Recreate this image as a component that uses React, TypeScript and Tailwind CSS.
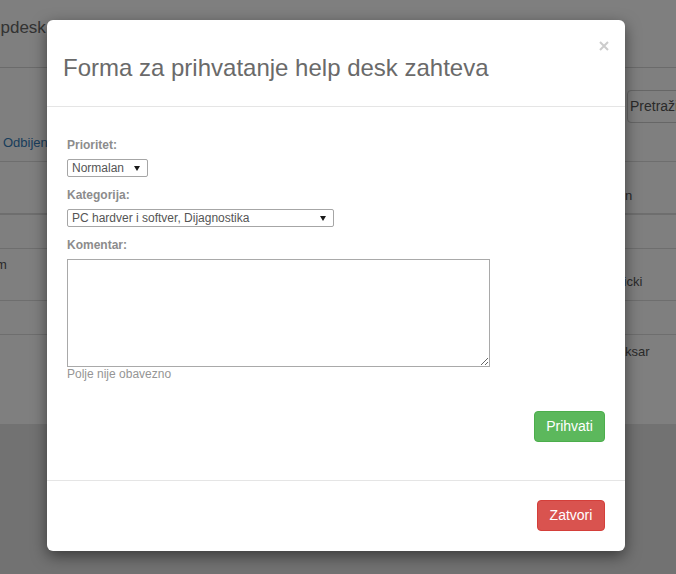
import React from "react";

const Arrow = () => (
    <svg width="6" height="5" viewBox="0 0 6 5" className="shrink-0">
        <polygon points="0,0 6,0 3,5" fill="#1a1a1a" />
    </svg>
);

const FakeSelect = (props: { value: string; width: string }) => {
    return (
        <div className={"flex h-[18px] items-center justify-between rounded-[2px] border border-[#a6a6a6] bg-white pl-[4px] pr-[7px] text-[12px] leading-none text-[#555] " + props.width}>
            <span>{props.value}</span>
            <Arrow />
        </div>
    );
};

export default function App() {
    return (
        <div className="relative h-[574px] w-full overflow-hidden bg-[#e4e4e4] font-['Liberation_Sans',Arial,sans-serif]">
            {/* page behind the modal */}
            <div className="h-[424px] bg-white text-[13px] leading-[17px] text-[#555]">
                <nav className="flex h-[68px] items-start border-b border-[#d6d6d6] pt-[18px]">
                    <span className="-ml-[25px] text-[17px] leading-[20px] text-[#666]">Helpdesk</span>
                </nav>
                <div className="flex h-[93px] flex-col">
                    <div className="mt-[22px] flex h-[33px] justify-end">
                        <button className="-mr-[22px] w-[71px] rounded-[4px] border border-[#ccc] bg-white pl-[2px] text-left text-[14px] text-[#555]">
                            Pretraži
                        </button>
                    </div>
                    <div className="flex flex-1 items-center">
                        <a className="ml-[3px] text-[#337ab7]">Odbijen</a>
                    </div>
                </div>
                <div className="grid h-[54px] grid-cols-[47px_1fr_51px] border-t border-b-2 border-[#ddd]">
                    <div />
                    <div />
                    <div className="flex items-end pb-[9px]">
                        <span className="-ml-[44px] whitespace-nowrap text-[#555]">Dodeljen</span>
                    </div>
                </div>
                <div className="grid h-[34px] grid-cols-[47px_1fr_51px] border-b border-[#ddd]" />
                <div className="grid h-[52px] grid-cols-[47px_1fr_51px] border-b border-[#ddd]">
                    <div className="overflow-hidden pt-[7px]">
                        <span className="-ml-[33px] block whitespace-nowrap">Sistem</span>
                    </div>
                    <div />
                    <div className="pt-[24px]">
                        <span className="-ml-[26px] block whitespace-nowrap">Tomicki</span>
                    </div>
                </div>
                <div className="grid h-[34px] grid-cols-[47px_1fr_51px] border-b border-[#ddd]" />
                <div className="grid grid-cols-[47px_1fr_51px]">
                    <div />
                    <div />
                    <div className="pt-[8px]">
                        <span className="-ml-[16px] block whitespace-nowrap">Paksar</span>
                    </div>
                </div>
            </div>

            {/* backdrop */}
            <div className="absolute inset-0 bg-black/50" />

            {/* modal */}
            <div className="absolute left-[47px] top-[20px] w-[578px] rounded-[6px] bg-white shadow-[0_5px_15px_rgba(0,0,0,0.5)]">
                <div className="relative border-b border-[#e5e5e5] px-[16px] pb-[25px] pt-[35px]">
                    <h4 className="text-[24px] leading-[26px] text-[#6a6a6a]">Forma za prihvatanje help desk zahteva</h4>
                    <svg className="absolute left-[552px] top-[21px]" width="10" height="10" viewBox="0 0 10 10">
                        <path d="M1 1 L9 9 M9 1 L1 9" stroke="#cccccc" strokeWidth="2" />
                    </svg>
                </div>

                <div className="px-[20px] pb-[38px] pt-[30px]">
                    <label className="block text-[12px] font-bold leading-[17px] text-[#8c8c8c]">Prioritet:</label>
                    <div className="mt-[5px]">
                        <FakeSelect value="Normalan" width="w-[81px]" />
                    </div>

                    <label className="mt-[10px] block text-[12px] font-bold leading-[17px] text-[#8c8c8c]">Kategorija:</label>
                    <div className="mt-[5px]">
                        <FakeSelect value="PC hardver i softver, Dijagnostika" width="w-[267px]" />
                    </div>

                    <label className="mt-[10px] block text-[12px] font-bold leading-[17px] text-[#8c8c8c]">Komentar:</label>
                    <textarea className="mt-[5px] block h-[108px] w-[423px] border border-[#a9a9a9] bg-white" />
                    <p className="text-[12px] leading-[15px] text-[#959595]">Polje nije obavezno</p>

                    <div className="mt-[29px] flex justify-end">
                        <button className="h-[31px] w-[71px] rounded-[4px] border border-[#4cae4c] bg-[#5cb85c] text-[14px] text-white">
                            Prihvati
                        </button>
                    </div>
                </div>

                <div className="flex justify-end border-t border-[#e5e5e5] px-[20px] pb-[20px] pt-[19px]">
                    <button className="h-[31px] w-[68px] rounded-[4px] border border-[#d43f3a] bg-[#d9534f] text-[14px] text-white">
                        Zatvori
                    </button>
                </div>
            </div>
        </div>
    );
}
